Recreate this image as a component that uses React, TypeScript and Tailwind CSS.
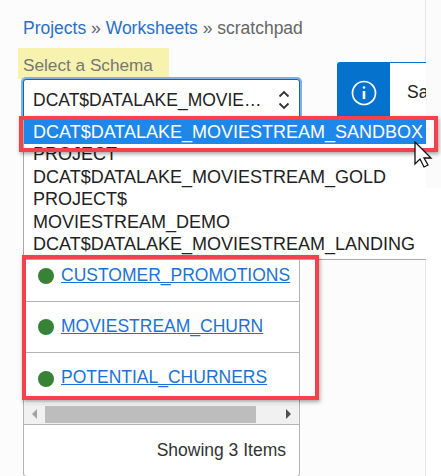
import React from "react";

const options = [
  "PROJECT",
  "DCAT$DATALAKE_MOVIESTREAM_GOLD",
  "PROJECT$",
  "MOVIESTREAM_DEMO",
  "DCAT$DATALAKE_MOVIESTREAM_LANDING",
];
const items = ["CUSTOMER_PROMOTIONS", "MOVIESTREAM_CHURN", "POTENTIAL_CHURNERS"];

export default function App() {
  return (
    <div className="relative w-[441px] h-[476px] overflow-hidden bg-white font-['Liberation_Sans',Arial,sans-serif]">
      <div className="w-[426px] h-[476px] bg-[#fcfcfc] pl-[23px] pt-[18px] border-r border-[#e6e6e6]">
        <div className="h-[20px] text-[17.5px] leading-[20px] text-[#666]">
          <span className="text-[#2a6fc4]">Projects</span>
          <span> » </span>
          <span className="text-[#2a6fc4]">Worksheets</span>
          <span> » scratchpad</span>
        </div>
        <div className="mt-[10px] -ml-[5px] w-[151px] h-[31px] bg-[#f7f2ad] pl-[5px] pt-[7px] text-[17.2px] leading-[20px] text-[#777]">
          Select a Schema
        </div>
        <div className="flex items-start gap-[37px]">
          <div className="w-[277px] shrink-0">
            <div className="flex h-[44px] items-center justify-between rounded-[3px] border border-[#0a68b8] bg-white pb-[2px] pl-[9px] pr-[9px] text-[17.5px] text-[#222] shadow-[0_0_0_2px_#7fb0e6]">
              <span>DCAT$DATALAKE_MOVIE…</span>
              <svg width="12" height="20" viewBox="0 0 12 20" fill="none" stroke="#333" strokeWidth="1.8">
                <path d="M1.5 6.5 6 2l4.5 4.5" />
                <path d="M1.5 13.5 6 18l4.5-4.5" />
              </svg>
            </div>
            <div className="h-[128px]" />
            <div className="rounded-b-[4px] border-x border-b border-[#b4b4b8] bg-white">
              {items.map((t, i) => (
                <div key={t} className={"flex h-[51px] items-center gap-[7px] pl-[14px] " + (i < 2 ? "border-b border-[#b4b4b8]" : "")}>
                  <span className="h-[16px] w-[16px] shrink-0 rounded-full bg-[#378237]" />
                  <span className="pb-[2px] text-[17.5px] text-[#1a73d4] underline">{t}</span>
                </div>
              ))}
              <div className="flex h-[21px] items-center border-b border-[#b4b4b8] bg-[#f1f1f1]">
                <span className="ml-[8px] h-0 w-0 border-y-[5px] border-r-[5px] border-y-transparent border-r-[#a3a3a3]" />
                <span className="ml-[8px] h-[17px] w-[211px] bg-[#bdbdbd]" />
                <span className="ml-[30px] h-0 w-0 border-y-[5px] border-l-[5px] border-y-transparent border-l-[#505050]" />
              </div>
              <div className="h-[51px] pr-[13px] pt-[15px] text-right text-[17.5px] leading-[20px] text-[#333]">Showing 3 Items</div>
            </div>
          </div>
          <div className="-mt-[17px] flex h-[60px] flex-1 items-stretch rounded-l-[3px] border-l border-t border-[#0572ce] bg-white">
            <div className="flex w-[52px] items-center justify-center bg-[#0572ce]">
              <svg width="26" height="26" viewBox="0 0 26 26" fill="none" stroke="white" strokeWidth="1.7">
                <circle cx="13" cy="13" r="11.5" />
                <path d="M13 11v8" strokeWidth="2.6" />
                <circle cx="13" cy="7.5" r="1.3" fill="white" stroke="none" />
              </svg>
            </div>
            <span className="ml-[17px] mt-[19px] text-[17.5px] leading-[20px] text-[#222]">Sa</span>
          </div>
        </div>
      </div>

      {/* faint strip right of the page, beside the cursor */}
      <div className="absolute left-[426px] top-0 h-[188px] w-[15px] bg-[#fbfbfb]" />

      {/* open dropdown */}
      <div className="absolute left-[23px] top-[120px] h-[140px] w-[403px] border-b border-l border-[#a8a8a8] bg-white text-[18px] text-[#222]">
        <div className="h-[24px] bg-[#1e88ea] pl-[9px] leading-[24px] text-white">DCAT$DATALAKE_MOVIESTREAM_SANDBOX</div>
        <div className="-mt-[1px]">
          {options.map((o) => (
            <div key={o} className="h-[22.5px] pl-[9px] leading-[22.5px]">{o}</div>
          ))}
        </div>
      </div>

      {/* annotation boxes */}
      <div className="absolute left-[19px] top-[116px] h-[36px] w-[419px] border-[4px] border-[#f4424a] shadow-[1px_2px_4px_rgba(0,0,0,0.35)]" />
      <div className="absolute left-[22px] top-[255px] h-[145px] w-[297px] border-[4px] border-[#f4424a] shadow-[1px_2px_4px_rgba(0,0,0,0.35)]" />

      {/* mouse cursor */}
      <svg className="absolute left-[414px] top-[141px]" width="20" height="28" viewBox="0 0 20 28" fill="white" stroke="#111" strokeWidth="1.3">
        <path d="M1 1v22l5-5 4 8 4-2-4-7h7z" />
      </svg>
    </div>
  );
}
